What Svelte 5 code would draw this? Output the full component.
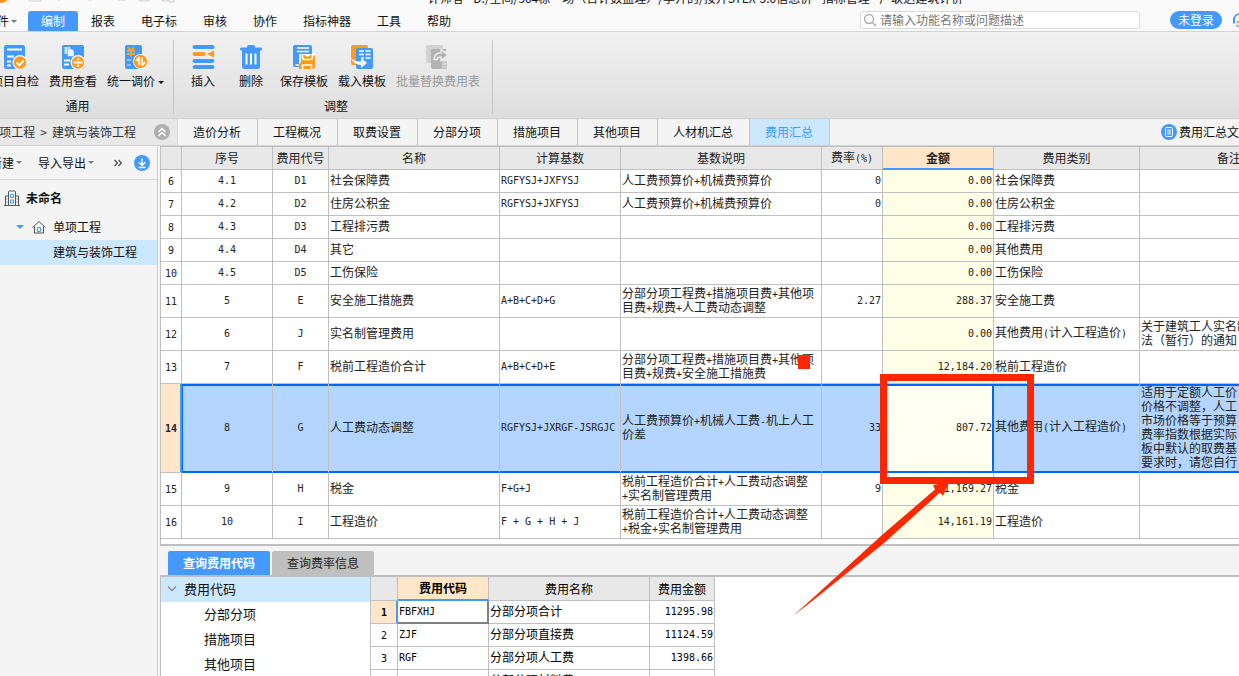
<script>
  const menus = ['编制', '报表', '电子标', '审核', '协作', '指标神器', '工具', '帮助'];

  const ribbon = [
    {
      name: '通用',
      cls: 'common',
      items: [
        { label: '项目自检', icon: 'check' },
        { label: '费用查看', icon: 'fee' },
        { label: '统一调价', icon: 'price', caret: true }
      ]
    },
    {
      name: '调整',
      cls: 'adjust',
      items: [
        { label: '插入', icon: 'insert' },
        { label: '删除', icon: 'trash' },
        { label: '保存模板', icon: 'save' },
        { label: '载入模板', icon: 'load' },
        { label: '批量替换费用表', icon: 'replace', disabled: true }
      ]
    }
  ];

  const tabs = ['造价分析', '工程概况', '取费设置', '分部分项', '措施项目', '其他项目', '人材机汇总', '费用汇总'];

  const columns = [
    { title: '', w: 21 },
    { title: '序号', w: 91 },
    { title: '费用代号', w: 56 },
    { title: '名称', w: 171 },
    { title: '计算基数', w: 121 },
    { title: '基数说明', w: 201 },
    { title: '费率(%)', w: 61 },
    { title: '金额', w: 111 },
    { title: '费用类别', w: 146 },
    { title: '备注', w: 179 }
  ];

  const rows = [
    { h: 23, n: 6, no: '4.1', code: 'D1', name: '社会保障费', base: 'RGFYSJ+JXFYSJ', desc: ['人工费预算价+机械费预算价'], rate: '0', sum: '0.00', kind: '社会保障费', note: [] },
    { h: 23, n: 7, no: '4.2', code: 'D2', name: '住房公积金', base: 'RGFYSJ+JXFYSJ', desc: ['人工费预算价+机械费预算价'], rate: '0', sum: '0.00', kind: '住房公积金', note: [] },
    { h: 23, n: 8, no: '4.3', code: 'D3', name: '工程排污费', base: '', desc: [], rate: '', sum: '0.00', kind: '工程排污费', note: [] },
    { h: 23, n: 9, no: '4.4', code: 'D4', name: '其它', base: '', desc: [], rate: '', sum: '0.00', kind: '其他费用', note: [] },
    { h: 23, n: 10, no: '4.5', code: 'D5', name: '工伤保险', base: '', desc: [], rate: '', sum: '0.00', kind: '工伤保险', note: [] },
    { h: 33, n: 11, no: '5', code: 'E', name: '安全施工措施费', base: 'A+B+C+D+G', desc: ['分部分项工程费+措施项目费+其他项', '目费+规费+人工费动态调整'], rate: '2.27', sum: '288.37', kind: '安全施工费', note: [] },
    { h: 33, n: 12, no: '6', code: 'J', name: '实名制管理费用', base: '', desc: [], rate: '', sum: '0.00', kind: '其他费用(计入工程造价)', note: ['关于建筑工人实名制', '法（暂行）的通知'] },
    { h: 33, n: 13, no: '7', code: 'F', name: '税前工程造价合计', base: 'A+B+C+D+E', desc: ['分部分项工程费+措施项目费+其他项', '目费+规费+安全施工措施费'], rate: '', sum: '12,184.20', kind: '税前工程造价', note: [] },
    { h: 89, n: 14, sel: true, no: '8', code: 'G', name: '人工费动态调整', base: 'RGFYSJ+JXRGF-JSRGJC', desc: ['人工费预算价+机械人工费-机上人工', '价差'], rate: '33', sum: '807.72', kind: '其他费用(计入工程造价)', note: ['适用于定额人工价', '价格不调整，人工', '市场价格等于预算', '费率指数根据实际', '板中默认的取费基', '要求时，请您自行'] },
    { h: 33, n: 15, no: '9', code: 'H', name: '税金', base: 'F+G+J', desc: ['税前工程造价合计+人工费动态调整', '+实名制管理费用'], rate: '9', sum: '1,169.27', kind: '税金', note: [] },
    { h: 33, n: 16, no: '10', code: 'I', name: '工程造价', base: 'F + G + H + J', desc: ['税前工程造价合计+人工费动态调整', '+税金+实名制管理费用'], rate: '', sum: '14,161.19', kind: '工程造价', note: [] }
  ];

  const codes = [
    { code: 'FBFXHJ', name: '分部分项合计', sum: '11295.98' },
    { code: 'ZJF', name: '分部分项直接费', sum: '11124.59' },
    { code: 'RGF', name: '分部分项人工费', sum: '1398.66' },
    { code: '', name: '分部分项材料费', sum: '' }
  ];

  // Separates half-width runs so that they keep the monospaced advance of the grid.
  const runs = (s) => String(s).match(/[\x20-\x7e]+|[^\x20-\x7e]+/g) ?? [];
  const half = (s) => s.charCodeAt(0) < 127;
</script>

{#snippet mix(s)}{#each runs(s) as r}{#if half(r)}<span class="m">{r}</span>{:else}{r}{/if}{/each}{/snippet}

{#snippet lines(list)}{#each list as l}<div class="line">{@render mix(l)}</div>{/each}{/snippet}

{#snippet icon(name)}
  <svg class="icon" viewBox="0 0 24 24" width="24" height="24" aria-hidden="true">
    {#if name === 'check'}
      <rect x="1" y="0" width="21" height="24" rx="2" fill="#4499ff" />
      <path d="M4 4.5h15M4 11.5h7M4 16.500h4M4 20.500h4" stroke="#fff" stroke-width="2" />
      <circle cx="17" cy="17.500" r="7.500" fill="#fff" />
      <circle cx="17" cy="17.500" r="6.300" fill="#ff9a1f" />
      <path d="M13.500 17.500l2.800 2.800 4.400-4.800" fill="none" stroke="#fff" stroke-width="2" />
    {:else if name === 'fee'}
      <rect x="1" y="0" width="22" height="24" rx="2" fill="#4499ff" />
      <path d="M3.500 2h6v7h-6z" fill="#cfe5ff" /><path d="M6.500 4h4.500l2 2v5.500h-6.500z" fill="#eaf4ff" stroke="#4499ff" stroke-width=".5" />
      <path d="M3 15.500h6M3 19.500h5" stroke="#fff" stroke-width="1.800" />
      <circle cx="17" cy="17.500" r="7.500" fill="#fff" />
      <circle cx="17" cy="17.500" r="6.300" fill="#ff9a1f" />
      <path d="M12.500 17.500h9" stroke="#fff" stroke-width="2" />
      <circle cx="17" cy="14.200" r="1.300" fill="#fff" /><circle cx="17" cy="20.800" r="1.300" fill="#fff" />
    {:else if name === 'price'}
      <rect x="1" y="0" width="17" height="24" rx="2" fill="#4499ff" />
      <path d="M4 2.500l3 3 3-3M3 6h8M3 9h8M7 5.500v6" fill="none" stroke="#ffa21f" stroke-width="1.900" />
      <path d="M3 15h4M3 20h4" stroke="#a9d0ff" stroke-width="1.700" />
      <circle cx="16.500" cy="16.500" r="7.500" fill="#fff" />
      <circle cx="16.500" cy="16.500" r="6.700" fill="#ff9a1f" />
      <path d="M15.200 12v8.500M15.200 12.500l-3 3.500M18 21v-8.500M18 20.500l3-3.500" fill="none" stroke="#fff" stroke-width="1.800" />
    {:else if name === 'insert'}
      <path d="M3.500 2h18M3.500 16h18M3.500 22h18" stroke="#4499ff" stroke-width="4" stroke-linecap="round" />
      <path d="M3.500 9h9" stroke="#ff9a1f" stroke-width="4" stroke-linecap="round" />
      <path d="M16 9L23 5.500v7z" fill="#ff9a1f" />
    {:else if name === 'trash'}
      <path d="M8 2.500a2 2 0 0 1 2-2.500h4a2 2 0 0 1 2 2.500h6q1 0 1 1.500t-1 1.500h-1v16q0 2.500-2.500 2.500h-13q-2.500 0-2.500-2.500v-16h-1q-1 0-1-1.500t1-1.500z" fill="#4499ff" />
      <path d="M7.500 8.500v11M12 8.500v11M16.500 8.500v11" stroke="#fff" stroke-width="2" />
    {:else if name === 'save'}
      <path d="M3 0h15a2 2 0 0 1 2 2v20h-17a2 2 0 0 1-2-2v-18a2 2 0 0 1 2-2z" fill="#4499ff" />
      <path d="M5 3h12M5 6.500h12M3.500 20h4" stroke="#fff" stroke-width="1.700" />
      <path d="M7 9h16v15h-16z" fill="#fff" opacity=".9" />
      <path d="M9 10h12q2 0 2 2v10q0 2-2 2h-14v-4h-1l3-3z" fill="#ff9a1f" />
      <path d="M10.500 10v2.500q0 2 2 2h6q2 0 2-2v-2.500M10.500 24v-4h9v4" fill="none" stroke="#fff" stroke-width="1.600" />
      <path d="M13 10.500h5" stroke="#fff" stroke-width="1.500" />
    {:else if name === 'load'}
      <rect x="1" y="0" width="17" height="20" rx="2" fill="#ff9a1f" />
      <rect x="6" y="3" width="17" height="21" rx="2" fill="#4499ff" />
      <path d="M9 6h5M15.500 6h5M9 9.500h5M15.500 9.500h5M11 13h3M15.500 13h5" stroke="#fff" stroke-width="1.700" />
      <path d="M1 13q4 4 10 3.500v-3.500l6 5-6 5v-3q-7 0-10-7z" fill="#fff" />
    {:else}
      <path d="M2 0h13a2 2 0 0 1 2 2v3h-12v13h-3a2 2 0 0 1-2-2v-14a2 2 0 0 1 2-2z" fill="#d2d2d2" />
      <path d="M5 4h15v2h-4v18h-9a2 2 0 0 1-2-2z" fill="#b2b2b2" />
      <path d="M8 14.500q0-6.500 7-6.500v-3.500l7 5.500-7 5.500v-3.500q-3.500 0-4 2.500z" fill="#b2b2b2" stroke="#ededed" stroke-width="1.400" />
      <path d="M15 17.500h6M15 20.500h6M15 23.200h6" stroke="#c0c0c0" stroke-width="1.800" />
    {/if}
  </svg>
{/snippet}

<div class="app">
  <header class="top">
    <div class="title">
      <svg class="quick" viewBox="0 0 180 11" width="180" height="11" aria-hidden="true">
        <circle cx="2" cy="-3" r="6" fill="#ff9a1f" />
        <path d="M29 0v1h12v-1M140 0v1h9v-1M162 0v1h6v-1M169 0v2h5v-2M58 0h2M89 0h2M118 0h8" fill="none" stroke="#cfcfcf" />
      </svg>
      <span class="name">计师者 - D:/空间/304栋一场（合计数监理）/李开的/按开STEX-5.0信息价 - 指标管理 - 广联达建筑计价</span>
    </div>
    <nav class="menu">
      <button class="file"><span>文件</span><i class="caret"></i></button>
      {#each menus as m, i}<button class:active={i === 0}>{m}</button>{/each}
      <label class="search">
        <svg viewBox="0 0 14 14" width="14" height="14" aria-hidden="true"><circle cx="6" cy="6" r="4.500" fill="none" stroke="#aaa" stroke-width="1.300" /><path d="M9.500 9.500L13 13" stroke="#aaa" stroke-width="1.500" /></svg>
        <input type="text" placeholder="请输入功能名称或问题描述" aria-label="搜索" />
      </label>
      <button class="login">未登录</button>
      <svg class="headset" viewBox="0 0 8 18" width="8" height="18" aria-hidden="true"><path d="M8 3q-5 1-5 6" fill="none" stroke="#4499ff" stroke-width="1.500" /><path d="M2 6.500h2v6h-2z" fill="#4499ff" /><path d="M8 10l-2 2" stroke="#ff9a1f" stroke-width="2" /><path d="M5 14l3 2" stroke="#6bc" stroke-width="1.500" /></svg>
    </nav>
  </header>

  <section class="ribbon">
    {#each ribbon as g}
      <div class="group {g.cls}">
        <div class="tools">
          {#each g.items as it}
            <button class="tool" disabled={it.disabled}>
              {@render icon(it.icon)}
              <span>{it.label}{#if it.caret}<i class="caret dark"></i>{/if}</span>
            </button>
          {/each}
        </div>
        <div class="gname">{g.name}</div>
      </div>
    {/each}
  </section>

  <div class="strip">
    <div class="crumb">
      <span>单项工程<b>&gt;</b>建筑与装饰工程</span>
      <svg viewBox="0 0 16 16" width="16" height="16" aria-hidden="true"><circle cx="8" cy="8" r="8" fill="#b0b0b0" /><path d="M4.500 8L8 4.500 11.500 8M4.500 12L8 8.500 11.500 12" fill="none" stroke="#fff" stroke-width="1.500" /></svg>
    </div>
    <nav class="tabs">
      {#each tabs as t, i}<button class:active={i === tabs.length - 1}>{t}</button>{/each}
    </nav>
    <a class="doc" href="#doc">
      <svg viewBox="0 0 16 16" width="16" height="16" aria-hidden="true"><circle cx="8" cy="8" r="8" fill="#4499ff" /><rect x="4.500" y="3.500" width="7" height="9" rx="1" fill="none" stroke="#fff" /><path d="M6 6h4M6 8h4M6 10h4" stroke="#fff" /></svg>
      <span>费用汇总文件</span>
    </a>
  </div>

  <div class="body">
    <aside>
      <div class="bar">
        <button class="new"><span>新建</span><i class="caret"></i></button>
        <button class="io">导入导出<i class="caret"></i></button>
        <svg class="more" viewBox="0 0 8 8" width="8" height="8" aria-hidden="true"><path d="M.5 1l3 3-3 3M4.500 1l3 3-3 3" fill="none" stroke="#444" stroke-width="1.200" /></svg>
        <svg viewBox="0 0 16 16" width="16" height="16" aria-hidden="true"><circle cx="8" cy="8" r="8" fill="#4499ff" /><path d="M8 3.500v6.500M4.800 7.300L8 10.500l3.200-3.200M4.500 12.500h7" fill="none" stroke="#fff" stroke-width="1.400" /></svg>
      </div>
      <ul class="nodes">
        <li class="root">
          <svg viewBox="0 0 16 16" width="16" height="16" aria-hidden="true"><path d="M0 15.500h16M1.500 15v-9h3M4.500 15v-13q0-1 1-1h5q1 0 1 1v13M11.500 6h3v9" fill="none" stroke="#555" /><path d="M2.500 9h1M2.500 12h1M12.500 9h1M12.500 12h1" stroke="#777" /><path d="M6.500 4.500h3v3h-3zM6.500 10h3v3h-3z" fill="none" stroke="#4499ff" /></svg>
          未命名
        </li>
        <li class="unit">
          <i class="open"></i>
          <svg viewBox="0 0 14 14" width="14" height="14" aria-hidden="true"><path d="M.5 7.500L7 1.500l6.500 6M2.500 6.500v6.500h9v-6.500" fill="none" stroke="#555" /><path d="M5.500 7.500h3v4h-3z" fill="none" stroke="#4499ff" /></svg>
          单项工程
        </li>
        <li class="leaf">建筑与装饰工程</li>
      </ul>
    </aside>

    <main>
      <div class="sheet">
        <table class="grid fees">
          <colgroup>{#each columns as c}<col style="width:{c.w}px" />{/each}</colgroup>
          <thead>
            <tr>{#each columns as c}<th class:cur={c.title === '金额'}>{@render mix(c.title)}</th>{/each}</tr>
          </thead>
          <tbody>
            {#each rows as r}
              <tr class:sel={r.sel} style="height:{r.h}px">
                <td class="c num">{@render mix(r.n)}</td>
                <td class="c">{@render mix(r.no)}</td>
                <td class="c">{@render mix(r.code)}</td>
                <td>{r.name}</td>
                <td>{@render mix(r.base)}</td>
                <td>{@render lines(r.desc)}</td>
                <td class="r">{@render mix(r.rate)}</td>
                <td class="r sum">{@render mix(r.sum)}</td>
                <td>{@render mix(r.kind)}</td>
                <td>{@render lines(r.note)}</td>
              </tr>
            {/each}
          </tbody>
        </table>
      </div>

      <section class="query">
        <div class="qtabs">
          <button class="active">查询费用代码</button>
          <button>查询费率信息</button>
        </div>
        <div class="qbody">
          <ul class="qtree">
            <li class="head"><svg viewBox="0 0 10 6" width="10" height="6" aria-hidden="true"><path d="M1 .5l4 4 4-4" fill="none" stroke="#888" stroke-width="1.300" /></svg>费用代码</li>
            <li>分部分项</li>
            <li>措施项目</li>
            <li>其他项目</li>
          </ul>
          <table class="grid codes">
            <colgroup><col class="k1" /><col class="k2" /><col class="k3" /><col class="k4" /></colgroup>
            <thead><tr><th></th><th class="cur">费用代码</th><th>费用名称</th><th>费用金额</th></tr></thead>
            <tbody>
              {#each codes as c, i}
                <tr class:first={i === 0}>
                  <td class="c num">{@render mix(i + 1)}</td>
                  <td class="code">{@render mix(c.code)}</td>
                  <td>{c.name}</td>
                  <td class="r">{@render mix(c.sum)}</td>
                </tr>
              {/each}
            </tbody>
          </table>
        </div>
      </section>
    </main>
  </div>

  <svg class="marks" viewBox="0 0 1239 676" width="1239" height="676" aria-hidden="true">
    <rect x="798" y="355" width="12" height="14" />
    <path fill-rule="evenodd" d="M880 374h154v110h-154zM887 381v96h140v-96z" />
    <path d="M793 616L820 591.500 882 535 935 489.500 933 485 949 482 943 496 940 492.500 884 543 821 594z" />
  </svg>
</div>

<style>
  :global(body) { margin: 0; overflow: hidden; }
  * { box-sizing: border-box; }
  .app { position: relative; display: flex; flex-direction: column; height: 100vh; overflow: hidden; background: #f4f4f4; color: #111; font: 12px/16px "Noto Sans CJK SC", sans-serif; white-space: nowrap; }
  button, input { font: inherit; color: inherit; border: 0; background: none; padding: 0; margin: 0; }
  ul { list-style: none; margin: 0; padding: 0; }
  a { color: inherit; text-decoration: none; }
  svg { flex: none; }
  .caret { flex: none; display: inline-block; border: 3px solid transparent; border-top-color: #777; border-bottom: 0; margin-left: 2px; vertical-align: middle; }
  .caret.dark { border-top-color: #111; margin-left: 3px; }

  .top { background: #fafafa; border-bottom: 1px solid #d2d2d2; }
  .title { display: flex; height: 11px; overflow: hidden; }
  .title .name { flex: 1; text-align: center; margin-top: -10px; padding-right: 28px; }
  .menu { display: flex; height: 20px; }
  .menu > button { padding: 0 13px; }
  .menu > .file { width: 28px; padding: 0 11px 0 0; display: flex; justify-content: flex-end; align-items: center; overflow: hidden; }
  .menu > .active { background: #4499ff; color: #fff; border-radius: 3px 3px 0 0; }
  .search { display: flex; align-items: center; gap: 3px; width: 280px; height: 18px; margin-left: auto; padding-left: 2px; border: 1px solid #dadada; border-radius: 3px; background: #fff; }
  .search input { flex: 1; min-width: 0; height: 16px; outline: 0; }
  .search input::placeholder { color: #757575; opacity: 1; }
  .menu > .login { height: 18px; margin: 0 9px 0 30px; padding: 0 8px; border-radius: 9px; background: #4499ff; color: #fff; }

  .ribbon { display: flex; height: 87px; background: linear-gradient(#f1f1f1, #dedede); border-bottom: 1px solid #cfcfcf; }
  .group { display: flex; flex-direction: column; padding-top: 13px; position: relative; }
  .group::after { content: ""; position: absolute; right: 0; top: 8px; bottom: 4px; width: 1px; background: #c4c4c4; }
  .common { margin-left: -14px; padding-right: 5px; }
  .adjust { padding: 13px 8px 0 5px; }
  .adjust .gname { padding-left: 8px; }
  .tools { display: flex; }
  .tool { display: flex; flex-direction: column; align-items: center; gap: 4px; min-width: 48px; padding: 0 5px; color: #111; }
  .tool:disabled { color: #999; }
  .gname { text-align: center; margin-top: 9px; }

  .strip { display: flex; height: 27px; border-bottom: 1px solid #d0d0d0; }
  .crumb { display: flex; align-items: center; justify-content: flex-end; gap: 18px; width: 178px; padding-right: 7px; background: #e8e8e8; color: #333; overflow: hidden; border-right: 1px solid #dcdcdc; }
  .crumb b { font-weight: 400; margin: 0 5px; }
  .tabs { display: flex; flex: 1; }
  .tabs button { padding: 0 16px 0 15px; border-right: 1px solid #c4c4c4; }
  .tabs .active { background: #cce8ff; color: #4499ff; }
  .doc { display: flex; align-items: center; gap: 2px; width: 78px; overflow: hidden; }

  .body { display: flex; flex: 1; min-height: 0; }
  aside { width: 158px; flex: none; margin-right: 2px; border-right: 1px solid #d0d0d0; overflow: hidden; }
  .bar { display: flex; align-items: center; height: 34px; border-bottom: 1px solid #d5d5d5; padding-right: 7px; }
  .bar button { display: flex; align-items: center; }
  .new { width: 22px; justify-content: flex-end; margin-right: 16px; }
  .more { margin: 0 12px 0 auto; }
  .nodes li { display: flex; align-items: center; height: 25px; }
  .nodes .root { height: 35px; gap: 6px; padding-left: 4px; font-weight: 700; }
  .nodes .unit { gap: 7px; padding: 0 0 1px 16px; }
  .nodes .leaf { padding: 0 0 1px 53px; background: #cce8ff; }
  .open { border: 4px solid transparent; border-top-color: #4499ff; border-bottom: 0; margin-right: 1px; }

  main { display: flex; flex-direction: column; flex: 1; min-width: 0; }
  .sheet { background: #fff; overflow: hidden; padding-bottom: 5px; flex: none; border-left: 1px solid #bfbfbf; border-top: 1px solid #bfbfbf; }
  .grid { table-layout: fixed; border-collapse: separate; border-spacing: 0; background: #fff; color: #222; line-height: 14px; }
  .fees { width: 1158px; }
  .grid th, .grid td { border: solid #bfbfbf; border-width: 0 1px 1px 0; padding: 0 2px; text-align: left; overflow: hidden; }
  .grid td { padding: 0 1px 2px; }
  .grid th { height: 23px; background: #e8e8e8; font-weight: 400; text-align: center; }
  .grid .c { text-align: center; padding: 0 0 2px; }
  .grid .num { padding: 0; }
  .grid .r { text-align: right; }
  .grid th.cur { background: #ffe6c8; font-weight: 700; border-bottom: 2px solid #4499ff; }
  .m { font: 10px/14px "DejaVu Sans Mono", "Liberation Mono", monospace; white-space: pre; }
  .line { height: 14px; }
  .fees .sum { background: #ffffe8; }
  .sel td { background: #b3d5ff; border-bottom-color: #06f; box-shadow: inset 0 2px #06f, inset 0 -1px #06f; }
  .sel .sum { background: #fffff2; border-right-color: #06f; box-shadow: inset 0 2px #06f, inset -1px -1px #06f; }
  .sel td:nth-child(2) { box-shadow: inset 1px 2px #06f, inset 0 -1px #06f; }
  .sel .num, .first .num { background: #ffe6c8; font-weight: 700; border-right-color: #4499ff; border-bottom-color: #bfbfbf; box-shadow: inset -1px 0 #4499ff; }
  .sel .num .m, .first .num .m { font-weight: 700; }

  .query { display: flex; flex-direction: column; flex: 1; min-height: 0; border-top: 2px solid #bfbfbf; }
  .qtabs { display: flex; gap: 2px; flex: none; height: 31px; padding: 5px 0 0 8px; border-bottom: 2px solid #bfbfbf; }
  .qtabs button { padding: 0 15px; background: #bfbfbf; color: #222; border-radius: 2px 2px 0 0; }
  .qtabs .active { background: #4499ff; color: #fff; font-weight: 700; }
  .qbody { display: flex; flex: 1; min-height: 0; overflow: hidden; background: #fff; align-items: flex-start; }
  .qtree { width: 211px; height: 100%; border: solid #bfbfbf; border-width: 0 1px; font-size: 13px; }
  .qtree li { display: flex; align-items: center; height: 25px; padding: 0 0 1px 43px; }
  .qtree .head { gap: 7px; padding-left: 6px; background: #cce8ff; }
  .codes { width: 344px; color: #000; }
  .codes tr { height: 23px; }
  .k1 { width: 27px; }
  .k2 { width: 91px; }
  .k3 { width: 161px; }
  .k4 { width: 65px; }
  .codes th { height: 24px; }
  .first .code { border-right-color: #808080; border-bottom-color: #808080; box-shadow: inset -1px -1px #808080; }

  .marks { position: absolute; left: 0; top: 0; fill: #ff2600; pointer-events: none; }
</style>
